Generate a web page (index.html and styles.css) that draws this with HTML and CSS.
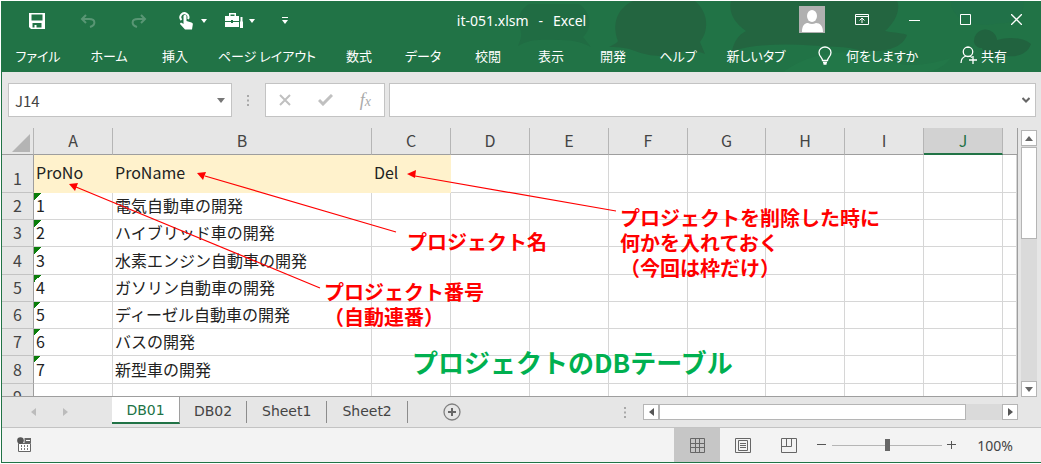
FILE: index.html
```html
<!DOCTYPE html>
<html lang="ja">
<head>
<meta charset="utf-8">
<title>it-051.xlsm - Excel</title>
<link rel="stylesheet" href="styles.css">
</head>
<body>
<div class="app">
  <header class="ribbon">
    <svg class="ribbon-art" width="540" height="71" viewBox="500 0 540 71" aria-hidden="true">
      <path d="M528 3h50c12 8 14 24 4 33l8 10c-8-4-16-7-30-7-16 0-30-2-43 6 3-8 5-11 1-20-2-9 2-17 10-22z" fill="#206c43"/>
      <path d="M632 0h62c14 12 14 30 5 41l5 12c-10-4-18-4-26-1-14 5-32 3-44-2-8-3-14-4-26-4 4-2 8-4 9-6-6-16-2-32 15-40z" fill="#236540"/>
      <path d="M730 0h166c4 8-2 22-12 30 10 2 18 2 22 4-4 12-20 17-38 16-12 0-18-4-30-4-36-2-72-6-107 4 2-9 6-16 14-20-12-8-18-20-15-30z" fill="#236540"/>
      <path d="M973 41a11 11 0 0 1 23-2c12-4 28-2 34 4-4 12-18 14-30 11-10 5-17-1-19-7-4 0-7-2-8-6z" fill="#21633f"/>
      <path d="M950 0h72c2 16-10 24-24 22-20 6-48-2-48-22z" fill="#20704a" opacity="0.5"/>
      <path d="M782 71c30-22 72-26 110-10 16 6 38 2 58-4-10 12-20 14-30 14z" fill="#227748"/>
    </svg>
    <div class="titlebar">
      <div class="quick">
        <button aria-label="上書き保存"><svg width="16" height="16" viewBox="0 0 16 16"><path fill="#fff" fill-rule="evenodd" d="M0 0h16v16H2l-2-2zM2.500 1.500v6h11v-6zM3.500 10v4.500h2V12h2v2.500h5V10z"/></svg></button>
        <button aria-label="元に戻す" class="dim"><svg width="16" height="14" viewBox="0 0 16 14"><path fill="none" stroke="#fff" stroke-width="2" d="M6 1 2 5l4 4M2 5h7c7 0 7 6 1 8"/></svg></button>
        <button aria-label="やり直し" class="dim"><svg width="16" height="14" viewBox="0 0 16 14"><path fill="none" stroke="#fff" stroke-width="2" d="m10 1 4 4-4 4M14 5H7C0 5 0 11 6 13"/></svg></button>
        <button aria-label="タッチ/マウス モードの切り替え" class="split"><svg width="14" height="18" viewBox="0 0 14 18"><path fill="none" stroke="#fff" stroke-width="2" d="M2.500 8A4 4 0 1 1 9 7"/><path fill="#fff" d="M4.500 4c0-1.500 3-1.500 3 0v5l5 1.500c1 .5 1.500 1 1.300 2L13 17.500H6L1 12c0-1.500 1.500-1.500 2-1l1.500 1z"/></svg><svg width="6" height="4" viewBox="0 0 6 4"><path fill="#fff" d="M0 0h6L3 4z"/></svg></button>
        <button aria-label="ツール" class="split"><svg width="18" height="16" viewBox="0 0 18 16"><path fill="#fff" fill-rule="evenodd" d="M4 3V0h7v3h3v5H8V7H6v1H0V3zM5.500 3h4V1.500h-4zM0 9h6v1h2V9h6v5H0zM15.500 4h2v4l.5 1v6h-3V9l.5-1z"/></svg><svg width="6" height="4" viewBox="0 0 6 4"><path fill="#fff" d="M0 0h6L3 4z"/></svg></button>
        <button aria-label="クイック アクセス ツール バーのユーザー設定"><svg width="6" height="7" viewBox="0 0 6 7"><path fill="#fff" d="M0 0h6v1H0zM0 3h6L3 7z"/></svg></button>
      </div>
      <h1 class="doc-title"><span>it-051.xlsm</span><span>-</span><span>Excel</span></h1>
      <div class="window-buttons">
        <button aria-label="アカウント"><svg width="26" height="27" viewBox="0 0 26 27"><path fill="#b0b0b0" d="M0 0h26v27H0z"/><ellipse cx="13" cy="10" rx="5" ry="6" fill="#fff"/><path fill="#fff" d="M3 26c0-7 3-9 6-9q4 2 8 0c4 0 7 3 7 9z"/></svg></button>
        <button aria-label="リボンの表示オプション"><svg width="14" height="11" viewBox="0 0 14 11"><path fill="none" stroke="#fff" d="M.5.500h13v10H.5zM.5 2.500h13M7 9V4M4.500 6.500 7 4l2.500 2.500"/></svg></button>
        <button aria-label="最小化"><svg width="11" height="11" viewBox="0 0 11 11"><path stroke="#fff" d="M0 6.500h11"/></svg></button>
        <button aria-label="最大化"><svg width="11" height="11" viewBox="0 0 11 11"><path fill="none" stroke="#fff" d="M.5.500h10v10H.5z"/></svg></button>
        <button aria-label="閉じる"><svg width="11" height="11" viewBox="0 0 11 11"><path stroke="#fff" stroke-width="1.300" d="m0 0 11 11M11 0 0 11"/></svg></button>
      </div>
    </div>
    <nav class="tabs">
      <button>ファイル</button><button>ホーム</button><button>挿入</button><button>ページ レイアウト</button><button>数式</button><button>データ</button><button>校閲</button><button>表示</button><button>開発</button><button>ヘルプ</button><button>新しいタブ</button>
      <button class="with-icon tell"><svg width="14" height="19" viewBox="0 0 14 19"><path fill="none" stroke="#fff" stroke-width="1.300" d="M4.500 14.500c0-3-3.500-4-3.500-8C1 3 4 1 7 1s6 2 6 5.500c0 4-3.500 5-3.500 8zM5 16.500h4M5.500 18h3"/></svg>何をしますか</button>
      <button class="with-icon share"><svg width="17" height="18" viewBox="0 0 17 18"><path fill="none" stroke="#fff" stroke-width="1.300" d="M8 1a4.500 4.500 0 0 1 0 9.500A4.500 4.500 0 0 1 8 1zM1 17c0-4 2-6 5-7M10 10l2 1.500M13 10v8M9 14h8"/></svg>共有</button>
    </nav>
  </header>

  <div class="formula-bar">
    <div class="name-box">
      <input type="text" value="J14" aria-label="名前ボックス">
      <button aria-label="名前の一覧"><svg width="8" height="5" viewBox="0 0 8 5"><path fill="#777" d="M0 0h8L4 5z"/></svg></button>
    </div>
    <svg class="grip" width="3" height="11" viewBox="0 0 3 11"><path fill="#a8a8a8" d="M0 0h2v2H0zM0 4.500h2v2H0zM0 9h2v2H0z"/></svg>
    <div class="fx-buttons">
      <button aria-label="キャンセル"><svg width="12" height="12" viewBox="0 0 12 12"><path stroke="#c0c0c0" stroke-width="2" d="m1 1 10 10M11 1 1 11"/></svg></button>
      <button aria-label="入力"><svg width="15" height="12" viewBox="0 0 15 12"><path fill="none" stroke="#c0c0c0" stroke-width="3" d="m1 6 4 4 9-9"/></svg></button>
      <button aria-label="関数の挿入" class="fx"><i>f</i><i class="fx-x">x</i></button>
    </div>
    <div class="formula">
      <input type="text" aria-label="数式バー">
      <button aria-label="数式バーの展開"><svg width="8" height="6" viewBox="0 0 8 6"><path fill="none" stroke="#666" stroke-width="2" d="m.5 1 3.500 3.500L7.500 1"/></svg></button>
    </div>
  </div>

  <main class="workspace">
    <div class="sheet">
      <table class="grid">
        <colgroup><col class="c-head"><col class="c-std"><col class="c-name"><col class="c-std"><col class="c-std"><col class="c-std"><col class="c-std"><col class="c-slim"><col class="c-std"><col class="c-std"><col class="c-std"><col></colgroup>
        <thead><tr><th class="corner"><svg width="18" height="18" viewBox="0 0 18 18"><path fill="#b4b4b4" d="M18 0v18H0z"/></svg></th><th>A</th><th>B</th><th>C</th><th>D</th><th>E</th><th>F</th><th>G</th><th>H</th><th>I</th><th class="selected">J</th><th class="rest"></th></tr></thead>
        <tbody>
          <tr class="first"><th>1</th><td class="field">ProNo</td><td class="field">ProName</td><td class="field">Del</td><td></td><td></td><td></td><td></td><td></td><td></td><td></td><td></td></tr>
          <tr><th>2</th><td class="flag">1</td><td>電気自動車の開発</td><td></td><td></td><td></td><td></td><td></td><td></td><td></td><td></td><td></td></tr>
          <tr><th>3</th><td class="flag">2</td><td>ハイブリッド車の開発</td><td></td><td></td><td></td><td></td><td></td><td></td><td></td><td></td><td></td></tr>
          <tr><th>4</th><td class="flag">3</td><td>水素エンジン自動車の開発</td><td></td><td></td><td></td><td></td><td></td><td></td><td></td><td></td><td></td></tr>
          <tr><th>5</th><td class="flag">4</td><td>ガソリン自動車の開発</td><td></td><td></td><td></td><td></td><td></td><td></td><td></td><td></td><td></td></tr>
          <tr><th>6</th><td class="flag">5</td><td>ディーゼル自動車の開発</td><td></td><td></td><td></td><td></td><td></td><td></td><td></td><td></td><td></td></tr>
          <tr><th>7</th><td class="flag">6</td><td>バスの開発</td><td></td><td></td><td></td><td></td><td></td><td></td><td></td><td></td><td></td></tr>
          <tr><th>8</th><td class="flag">7</td><td>新型車の開発</td><td></td><td></td><td></td><td></td><td></td><td></td><td></td><td></td><td></td></tr>
          <tr><th>9</th><td></td><td></td><td></td><td></td><td></td><td></td><td></td><td></td><td></td><td></td><td></td></tr>
        </tbody>
      </table>
      <svg class="arrows" width="640" height="180" viewBox="0 0 640 180" aria-hidden="true">
        <path stroke="#f00" stroke-width="1.200" d="M318 160 74 59M394 104 203 48M614 83 413 48"/>
        <path fill="#f00" d="m67 56 9-1-3 8zM195 45l9-1-3 8zM405 46l9-4-1 8z"/>
      </svg>
      <p class="note note-number">プロジェクト番号<br>（自動連番）</p>
      <p class="note note-name">プロジェクト名</p>
      <p class="note note-del">プロジェクトを削除した時に<br>何かを入れておく<br>（今回は枠だけ）</p>
      <p class="note note-table">プロジェクトのDBテーブル</p>
    </div>
    <div class="vscroll">
      <button aria-label="上へスクロール"><svg width="8" height="5" viewBox="0 0 8 5"><path fill="#666" d="M0 5h8L4 0z"/></svg></button>
      <div class="thumb"></div>
      <button class="end" aria-label="下へスクロール"><svg width="8" height="5" viewBox="0 0 8 5"><path fill="#666" d="M0 0h8L4 5z"/></svg></button>
    </div>
  </main>

  <div class="sheet-bar">
    <div class="sheet-nav">
      <button aria-label="前のシート"><svg width="5" height="8" viewBox="0 0 5 8"><path fill="#bcbcbc" d="M5 0v8L0 4z"/></svg></button>
      <button aria-label="次のシート"><svg width="5" height="8" viewBox="0 0 5 8"><path fill="#bcbcbc" d="M0 0v8l5-4z"/></svg></button>
    </div>
    <button class="sheet-tab active">DB01</button><button class="sheet-tab db">DB02</button><button class="sheet-tab">Sheet1</button><button class="sheet-tab">Sheet2</button>
    <button class="add" aria-label="新しいシート"><svg width="18" height="18" viewBox="0 0 18 18"><circle cx="9" cy="9" r="8" fill="none" stroke="#808080" stroke-width="1.300"/><path stroke="#666" stroke-width="2" d="M9 5v8M5 9h8"/></svg></button>
    <svg class="grip bar-grip" width="3" height="11" viewBox="0 0 3 11"><path fill="#a8a8a8" d="M0 0h2v2H0zM0 4.500h2v2H0zM0 9h2v2H0z"/></svg>
    <div class="hscroll">
      <button aria-label="左へスクロール"><svg width="5" height="8" viewBox="0 0 5 8"><path fill="#555" d="M5 0v8L0 4z"/></svg></button>
      <div class="thumb"></div>
      <button class="end" aria-label="右へスクロール"><svg width="5" height="8" viewBox="0 0 5 8"><path fill="#555" d="M0 0v8l5-4z"/></svg></button>
    </div>
  </div>

  <footer class="status">
    <button class="macro" aria-label="マクロの記録"><svg width="15" height="15" viewBox="0 0 15 15"><path fill="#fff" stroke="#666" d="M1.500 6.500h12v8h-12z"/><path fill="#666" d="M7.500 1H14v5H7.500z"/><path stroke="#fff" d="M9 3.500h4"/><path stroke="#777" stroke-dasharray="2 1" d="M4.500 8v6M7.500 8v6M10.500 8v6"/><circle cx="3.500" cy="3.500" r="3.300" fill="#555"/></svg></button>
    <div class="views">
      <button class="on" aria-label="標準"><svg width="17" height="15" viewBox="0 0 17 15"><path fill="none" stroke="#666" d="M1.500.500h14v14h-14zM6.500 0v15M10.500 0v15M1 5.500h15M1 9.500h15"/></svg></button>
      <button aria-label="ページ レイアウト"><svg width="16" height="15" viewBox="0 0 16 15"><path fill="none" stroke="#666" d="M.5.500h15v14H.5zM3.500 2.500h9v10h-9zM5 5.500h6M5 7.500h6M5 9.500h6"/></svg></button>
      <button aria-label="改ページ プレビュー"><svg width="16" height="15" viewBox="0 0 16 15"><path fill="none" stroke="#666" d="M.5.500h15v14H.5zM0 8.500h10.500V0M5.500 0v8"/></svg></button>
    </div>
    <div class="zoom">
      <button aria-label="縮小"><svg width="9" height="9" viewBox="0 0 9 9"><path stroke="#555" d="M0 3.500h9"/></svg></button>
      <input type="range" min="0" max="100" value="50" aria-label="ズーム">
      <button aria-label="拡大"><svg width="9" height="9" viewBox="0 0 9 9"><path stroke="#555" d="M0 3.500h9M4.500 0v8"/></svg></button>
      <button class="percent">100%</button>
    </div>
  </footer>
</div>
</body>
</html>
```
FILE: styles.css
```css
* { box-sizing: border-box; }
body { margin: 0; background: #fff; font-family: "Noto Sans", "Noto Sans CJK JP", sans-serif; font-size: 14px; color: #444; }
button, input { font: inherit; color: inherit; border: 0; background: none; padding: 0; margin: 0; min-width: 0; }
button { display: flex; align-items: center; justify-content: center; flex: none; }
svg { display: block; flex: none; }
p, h1 { margin: 0; }

.app { display: flex; flex-direction: column; height: calc(100vh - 2px); margin: 1px 0 1px 1px; border-left: 1px solid #217346; border-bottom: 1px solid #217346; background: #e6e6e6; }

.ribbon { position: relative; flex: none; background: #217346; color: #fff; }
.titlebar, .tabs { position: relative; }
.ribbon-art { position: absolute; top: 0; right: 0; }
.titlebar { display: grid; grid-template-columns: 1fr auto 1fr; align-items: center; height: 39px; }
.quick { display: flex; align-items: center; gap: 35px; padding-left: 27px; }
.quick .split { gap: 8px; }
.quick .dim + .split { margin-left: -3px; }
.quick .split + .split { gap: 6px; margin-left: -17px; }
.quick .split + button:last-child { margin-left: -8px; }
.dim { opacity: 0.25; }
.doc-title { display: flex; gap: 10px; padding-bottom: 1px; font-size: 14px; font-weight: 400; }
.window-buttons { display: flex; align-items: center; justify-content: flex-end; gap: 40px; padding-right: 19px; padding-bottom: 3px; }
.window-buttons button:first-child { margin-right: -10px; }

.tabs { display: grid; grid-template-columns: 72px 70px 62px 122px 62px 66px 64px 62px 62px 68px 88px auto 1fr; height: 32px; font-family: "Noto Sans CJK JP", sans-serif; font-size: 13px; font-feature-settings: "palt"; }
.tabs button { white-space: nowrap; padding-bottom: 2px; }
.tabs .with-icon { gap: 14px; padding-left: 18px; }
.tabs .share { gap: 4px; justify-content: flex-end; padding-right: 34px; }

.formula-bar { display: flex; flex: none; align-items: center; height: 56px; padding: 0 5px 0 6px; }
.name-box, .fx-buttons, .formula { display: flex; align-items: center; height: 34px; border: 1px solid #c3c3c3; background: #fff; }
.name-box { width: 224px; padding: 0 6px; font-family: "Noto Sans CJK JP", sans-serif; font-size: 15px; }
.name-box input, .formula input { flex: 1; }
.formula-bar .grip { margin: 0 15px; }
.fx-buttons { width: 120px; padding: 0 13px; justify-content: space-between; }
.fx { font-family: "Liberation Serif", serif; font-size: 18px; color: #aaa; align-items: baseline; }
.fx-x { font-size: 14px; }
.formula { flex: 1; margin-left: 4px; padding-right: 5px; }

.workspace { display: flex; flex: 1; min-height: 0; }
.sheet { position: relative; flex: 1; min-width: 0; overflow: hidden; border-right: 1px solid #9e9e9e; border-bottom: 1px solid #9e9e9e; }
.grid { width: 100%; table-layout: fixed; border-collapse: separate; border-spacing: 0; font-family: "Noto Sans CJK JP", sans-serif; font-size: 16px; line-height: 20px; }
.c-head { width: 32px; }
.c-std { width: 79px; }
.c-slim { width: 78px; }
.c-name { width: 259px; }
.grid th { padding: 0 0 2px; font-weight: 400; background: #e6e6e6; color: #444; }
.grid thead th { height: 27px; border-right: 1px solid #b5b5b5; border-bottom: 1px solid #9e9e9e; }
.grid thead .selected { background: #d2d2d2; color: #217346; border-bottom: 2px solid #217346; }
.grid thead .rest { border-right: 0; }
.corner svg { margin: 6px 3px 0 auto; }
.grid tbody th { border-right: 1px solid #9e9e9e; border-bottom: 1px solid #c3c3c3; }
.grid td { height: 27px; padding: 0 0 2px 2px; background: #fff; color: #222; border-right: 1px solid #d6d6d6; border-bottom: 1px solid #d6d6d6; white-space: nowrap; }
.grid tbody tr:nth-child(4n) td { height: 28px; }
.grid .first td { height: 38px; padding-bottom: 4px; }
.grid .first th { vertical-align: bottom; padding-bottom: 4px; }
.grid td.field { background: #fff2cc; border-color: #fff2cc; }
.grid td.flag { background: linear-gradient(135deg, #0a7d0a 50%, #fff 50%) no-repeat 0 0 / 7px 7px #fff; }

.arrows { position: absolute; left: 0; top: 0; }
.note { position: absolute; color: #f00; font-family: "Noto Sans CJK JP", sans-serif; font-size: 20px; font-weight: 700; line-height: 25px; white-space: nowrap; }
.note-number { left: 322px; top: 151px; }
.note-name { left: 405px; top: 101px; }
.note-del { left: 618px; top: 77px; }
.note-table { left: 410px; top: 216px; font-size: 26px; line-height: 36px; color: #00b050; }

.vscroll { display: flex; flex-direction: column; flex: none; width: 16px; margin: 2px 4px 0 3px; background: #dadada; }
.vscroll button, .hscroll button { width: 16px; height: 16px; background: #fff; border: 1px solid #b5b5b5; }
.thumb { background: #fff; border: 1px solid #b5b5b5; }
.vscroll .thumb { height: 92px; margin-top: 1px; }
.vscroll .end { margin-top: auto; }

.sheet-bar { display: flex; flex: none; align-items: center; height: 31px; border-bottom: 1px solid #c3c3c3; font-family: "DejaVu Sans", sans-serif; }
.sheet-nav { display: flex; gap: 27px; width: 110px; padding-left: 29px; }
.sheet-tab { height: 22px; padding: 0 15px 2px; border-right: 1px solid #8c8c8c; }
.sheet-tab.db { width: 67px; padding: 0 0 2px; }
.sheet-tab.active { align-self: flex-start; width: 68px; height: 27px; padding: 0; background: #fff; color: #217346; border-right: 1px solid #9e9e9e; border-bottom: 2px solid #217346; }
.add { margin-left: 35px; }
.bar-grip { margin: 0 16px 0 auto; }
.hscroll { display: flex; width: 375px; margin-right: 23px; background: #dadada; }
.hscroll .thumb { width: 307px; }
.hscroll .end { margin-left: auto; }

.status { display: flex; flex: none; align-items: center; height: 34px; padding-left: 15px; background: #f3f3f3; }
.macro { padding-bottom: 2px; }
.views { display: flex; align-self: stretch; margin-left: auto; }
.views button { width: 46px; }
.views .on { background: #c6c6c6; }
.zoom { display: flex; align-items: center; padding: 0 28px 0 5px; }
.zoom input { appearance: none; width: 110px; height: 12px; margin: 0 5px 0 6px; background: linear-gradient(#b5b5b5, #b5b5b5) no-repeat center / 100% 1px; }
.zoom input::-webkit-slider-thumb { appearance: none; width: 5px; height: 12px; background: #666; }
.percent { margin-left: 21px; }
```
